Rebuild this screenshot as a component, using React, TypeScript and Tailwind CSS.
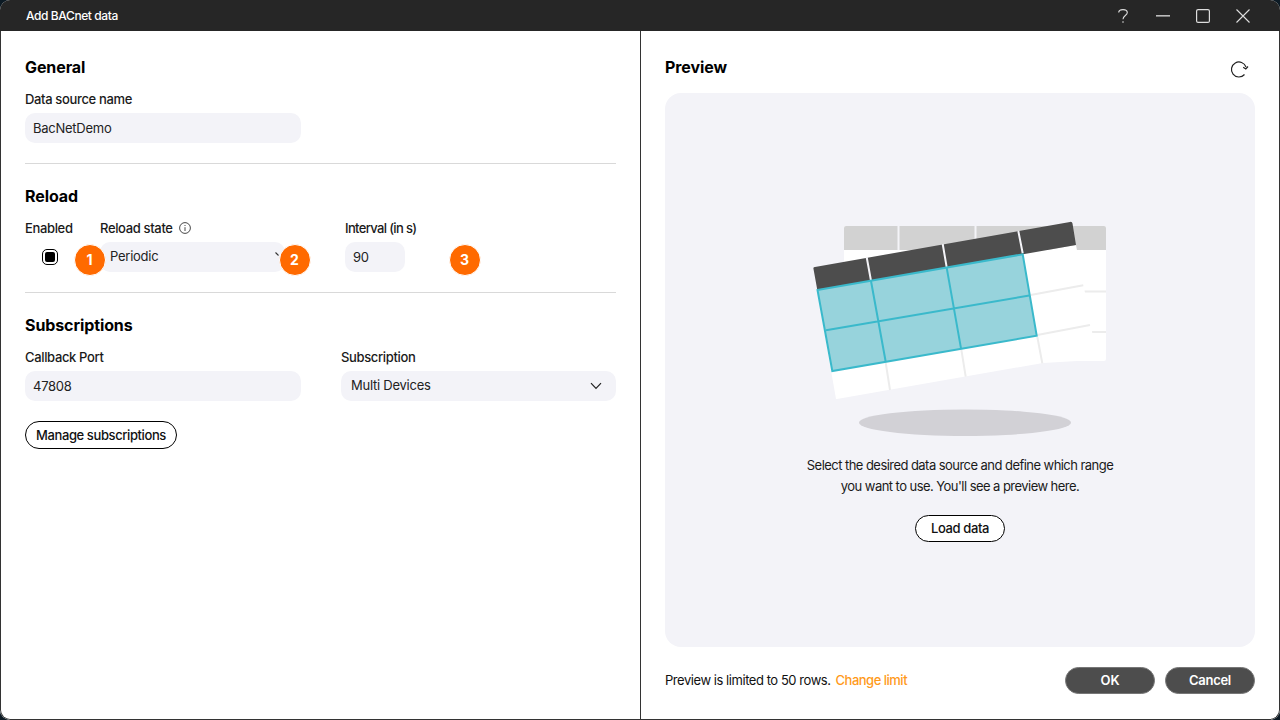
import React from "react";

const font = { fontFamily: "Inter, 'Liberation Sans', sans-serif" };

function Chevron() {
  return (
    <svg width="12" height="8" viewBox="0 0 12 8" fill="none" stroke="#222" strokeWidth="1.2">
      <path d="M1 1.2 L6 6.4 L11 1.2" />
    </svg>
  );
}

function Badge({ n, className }: { n: string; className: string }) {
  return (
    <div className={"absolute w-[32px] h-[32px] pb-[2px] pr-[1px] rounded-full bg-[#ff6a00] border border-white flex items-center justify-center text-white text-[14px] font-bold " + className}>
      {n}
    </div>
  );
}

function Illustration() {
  return (
    <svg width="300" height="220" viewBox="810 220 300 220" className="block">
      <rect x="844" y="226" width="262" height="135" rx="2" fill="#fff" />
      <path d="M846 226 H1104 a2 2 0 0 1 2 2 V250 H844 V228 a2 2 0 0 1 2 -2 Z" fill="#d2d2d2" />
      <path d="M898.5 226 V250 M975.5 226 V250" stroke="#f4f4f8" strokeWidth="2" />
      <path d="M1084 291.5 H1106 M1092 332 H1106" stroke="#ececec" strokeWidth="2" />
      <path d="M817 290 L1076 245 L1092 330 L1094 360 L1043 363 L837 399 a2 2 0 0 1 -1 0 Z" fill="#fff" />
      <path d="M815 267 L1070 222 a2 2 0 0 1 2.5 1.5 L1076 245 L817.3 290 L813.5 269 a1.6 1.6 0 0 1 1.5 -2 Z" fill="#4d4d4d" />
      <path d="M866.7 257.3 L871 280.7 M942.7 244 L946.7 267.3 M1018.3 231 L1022.7 253.3" stroke="#f4f4f8" strokeWidth="2" />
      <path d="M1030.7 295 L1083.3 285.3 M1037.3 335 L1090 325 M885.7 362.7 L890 390 M961.3 349.3 L965.7 376.7 M1037.3 336.7 L1042.3 363.3" stroke="#ececec" strokeWidth="2" />
      <path d="M817.5 290 L1022.7 254.3 L1036.7 335.7 L832.3 371 Z" fill="#97d3dc" stroke="#3ab9cb" strokeWidth="2" />
      <path d="M826 330.2 L1029.3 295.5 M871 281 L885.7 361.7 M946.7 267.8 L961 348.3" stroke="#3ab9cb" strokeWidth="2" fill="none" />
      <ellipse cx="965" cy="422.7" rx="106" ry="13.3" fill="#d2d1d6" />
    </svg>
  );
}

const field = "h-[30px] rounded-[10px] bg-[#f3f3f8] flex items-center text-[13px] text-[#222] tracking-[-0.25px]";
const labelBase = "h-[16px] leading-[16px] text-[13px] font-medium text-[#1a1a1a]";
const label = labelBase + " tracking-[-0.35px]";
const heading = "h-[20px] leading-[18px] text-[16px] font-bold text-black tracking-[-0.1px]";

export default function App() {
  return (
    <div style={font} className="w-full h-screen bg-[#0c1a24] overflow-hidden">
      <div className="w-full h-full flex flex-col rounded-[10px] overflow-hidden bg-white">
        <div className="h-[31px] shrink-0 bg-[#262626] flex items-center pl-[26px] text-white">
          <span className="text-[12px] font-medium tracking-[-0.4px]">Add BACnet data</span>
          <div className="ml-auto flex items-center">
            <svg width="10" height="14" viewBox="0 0 10 14" fill="none" stroke="#ddd" strokeWidth="1.1" className="mr-[28px]">
              <path d="M0.7 3.6 C0.7 -0.4 9.3 -0.4 9.3 3.6 C9.3 6.6 5 6.6 5 10.3" />
              <circle cx="5" cy="13" r="0.8" fill="#ddd" stroke="none" />
            </svg>
            <svg width="14" height="2" viewBox="0 0 14 2" className="mr-[26px]">
              <rect width="14" height="1.6" fill="#bbb" />
            </svg>
            <svg width="14" height="14" viewBox="0 0 14 14" fill="none" stroke="#ddd" strokeWidth="1.2" className="mr-[26px]">
              <rect x="0.6" y="0.6" width="12.8" height="12.8" rx="1.5" />
            </svg>
            <svg width="14" height="14" viewBox="0 0 14 14" fill="none" stroke="#ddd" strokeWidth="1.1" className="mr-[30px]">
              <path d="M0.5 0.5 L13.5 13.5 M13.5 0.5 L0.5 13.5" />
            </svg>
          </div>
        </div>
        <div className="flex-1 flex border-l border-b border-r border-[#333] rounded-b-[10px] min-h-0">
          <div className="w-[640px] shrink-0 border-r border-[#333] pl-[24px] pr-[24px] pt-[27px]">
            <div className={heading}>General</div>
            <div className={label + " mt-[13px]"}>Data source name</div>
            <div className={field + " mt-[6px] w-[276px] pl-[8px] pt-[2px]"}>BacNetDemo</div>
            <div className="h-px bg-[#d9d9d9] mt-[20px]" />
            <div className={heading + " mt-[23px]"}>Reload</div>
            <div className="relative flex mt-[13px]">
              <div className="w-[75px]">
                <div className={label}>Enabled</div>
                <div className="mt-[6px] h-[30px] pl-[17px] pt-[7px]">
                  <div className="w-[16px] h-[16px] rounded-[5px] border border-black bg-white flex items-center justify-center">
                    <div className="w-[10px] h-[10px] rounded-[2px] bg-black" />
                  </div>
                </div>
              </div>
              <div className="w-[245px]">
                <div className={label + " flex items-center gap-[6px]"}>
                  Reload state
                  <svg width="12" height="12" viewBox="0 0 12 12" fill="none" stroke="#333" strokeWidth="0.9">
                    <circle cx="6" cy="6" r="5.4" />
                    <path d="M6 5.2 V9 M6 3 V4" />
                  </svg>
                </div>
                <div className={field + " mt-[6px] w-[185px] pl-[10px]"}>Periodic</div>
              </div>
              <div>
                <div className={labelBase + " tracking-[-0.65px]"}>Interval (in s)</div>
                <div className={field + " mt-[6px] w-[60px] pl-[8px] pt-[1px]"}>90</div>
              </div>
              <svg width="5" height="5" viewBox="0 0 5 5" fill="none" stroke="#333" strokeWidth="1.1" className="absolute left-[250px] top-[32px]">
                <path d="M0.5 0.5 L3.5 3.5" />
              </svg>
              <Badge n="1" className="left-[49px] top-[24px]" />
              <Badge n="2" className="left-[254px] top-[24px]" />
              <Badge n="3" className="left-[424px] top-[24px]" />
            </div>
            <div className="h-px bg-[#d9d9d9] mt-[20px]" />
            <div className={heading + " mt-[23px]"}>Subscriptions</div>
            <div className="flex mt-[13px] gap-[40px]">
              <div className="w-[276px]">
                <div className={label}>Callback Port</div>
                <div className={field + " mt-[6px] pl-[8px] pt-[2px]"}>47808</div>
              </div>
              <div className="w-[275px]">
                <div className={label}>Subscription</div>
                <div className={field + " mt-[6px] pl-[10px] pr-[14px] justify-between"}>
                  Multi Devices
                  <Chevron />
                </div>
              </div>
            </div>
            <button className="mt-[20px] w-[152px] h-[28px] pt-[1px] rounded-full border border-black text-[13px] font-medium text-[#111] bg-white tracking-[-0.4px]">
              Manage subscriptions
            </button>
          </div>
          <div className="flex-1 min-w-0 pl-[24px] pr-[24px] pt-[27px] flex flex-col">
            <div className="h-[20px] flex items-center justify-between">
              <div className={heading}>Preview</div>
              <svg width="20" height="20" viewBox="0 0 20 20" fill="none" stroke="#222" strokeWidth="1.2" className="mr-[6px] mt-[4px]">
                <path d="M17 7 A7.5 7.5 0 1 0 15.5 14.5" />
                <path d="M19 6.5 L16.8 9 L14.2 7.2" />
              </svg>
            </div>
            <div className="mt-[15px] h-[554px] rounded-[16px] bg-[#f3f3f8] flex flex-col items-center pt-[127px]">
              <Illustration />
              <div className="mt-[15px] text-center text-[13px] leading-[21px] text-[#1a1a1a] tracking-[-0.55px]">
                Select the desired data source and define which range
                <br />
                you want to use. You'll see a preview here.
              </div>
              <button className="mt-[18px] w-[90px] h-[27px] rounded-full border border-black text-[13px] font-medium text-[#111] bg-white tracking-[-0.4px]">
                Load data
              </button>
            </div>
            <div className="flex items-center mt-[20px]">
              <span className="text-[13px] text-[#111] tracking-[-0.45px]">Preview is limited to 50 rows.</span>
              <span className="ml-[5px] text-[13px] font-medium text-[#ff9a1a] tracking-[-0.5px]">Change limit</span>
              <button className="ml-auto w-[90px] h-[27px] rounded-full bg-[#4d4d4d] border border-[#777] text-white text-[13px] font-semibold">OK</button>
              <button className="ml-[10px] w-[90px] h-[27px] rounded-full bg-[#4d4d4d] border border-[#777] text-white text-[13px] font-semibold tracking-[-0.3px]">Cancel</button>
            </div>
          </div>
        </div>
      </div>
    </div>
  );
}
